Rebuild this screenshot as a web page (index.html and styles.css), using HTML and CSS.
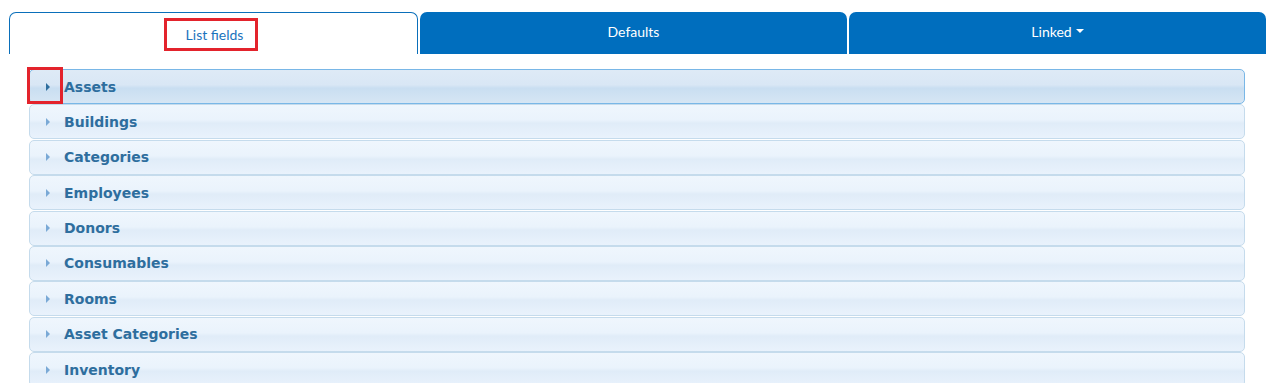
FILE: index.html
```html
<!DOCTYPE html>
<html lang="en">
<head>
    <meta charset="UTF-8">
    <title>List fields</title>
    <link rel="stylesheet" href="styles.css">
</head>
<body>
    <div class="tabs">
        <div class="tab tab-active"><span class="marked">List fields</span></div>
        <div class="tab tab-defaults">Defaults</div>
        <div class="tab tab-linked">Linked <span class="caret"></span></div>
    </div>
    <div class="panel">
        <div class="row row-active"><span class="mark-box"></span><span class="arrow-box"><span class="arrow"></span></span>Assets</div>
        <div class="row"><span class="arrow-box"><span class="arrow"></span></span>Buildings</div>
        <div class="row"><span class="arrow-box"><span class="arrow"></span></span>Categories</div>
        <div class="row"><span class="arrow-box"><span class="arrow"></span></span>Employees</div>
        <div class="row"><span class="arrow-box"><span class="arrow"></span></span>Donors</div>
        <div class="row"><span class="arrow-box"><span class="arrow"></span></span>Consumables</div>
        <div class="row"><span class="arrow-box"><span class="arrow"></span></span>Rooms</div>
        <div class="row"><span class="arrow-box"><span class="arrow"></span></span>Asset Categories</div>
        <div class="row"><span class="arrow-box"><span class="arrow"></span></span>Inventory</div>
    </div>
</body>
</html>
```

FILE: styles.css
```css
body {
    margin: 0;
    padding: 12px 13px 0 9px;
    background-color: #ffffff;
    font-family: Lato, "Open Sans", sans-serif;
    overflow: hidden;
}
.tabs {
    display: flex;
    gap: 2px;
    height: 42px;
}
.tab {
    display: flex;
    justify-content: center;
    align-items: center;
    box-sizing: border-box;
    padding-bottom: 4px;
    border-radius: 7px 7px 0 0;
    background-color: #006ebe;
    color: #ffffff;
    font-size: 14px;
}
.tab-active {
    width: 409px;
    align-items: flex-start;
    background-color: #ffffff;
    border: 1px solid #0a6fba;
    border-bottom: none;
    color: #1a73bd;
}
.tab-defaults {
    width: 427px;
}
.tab-linked {
    flex: 1;
}
.marked {
    display: inline-block;
    margin: 5px 0 0 -5px;
    padding: 5px 12px 5px 19px;
    line-height: 17px;
    border: 3px solid #e3232c;
}
.caret {
    display: inline-block;
    margin-left: 4px;
    border-left: 4px solid transparent;
    border-right: 4px solid transparent;
    border-top: 4px solid #ffffff;
    vertical-align: middle;
}
.panel {
    padding: 15px 21px 0 20px;
}
.row {
    position: relative;
    display: flex;
    align-items: center;
    box-sizing: border-box;
    height: 35px;
    margin-bottom: 0.375px;
    border: 1px solid #c5dbec;
    border-radius: 5px;
    background: linear-gradient(to bottom, #eff6fd 0%, #eaf3fc 45%, #e0ecf8 55%, #e9f2fc 100%);
    color: #2e6e9e;
    font-family: "DejaVu Sans", Verdana, sans-serif;
    font-weight: bold;
    font-size: 14px;
}
.row-active {
    border-color: #79b7e7;
    background: linear-gradient(to bottom, #deeaf6 0%, #d9e7f5 45%, #c9def1 55%, #d6e6f4 100%);
}
.arrow-box {
    display: flex;
    align-items: center;
    justify-content: center;
    width: 34px;
    height: 100%;
}
.arrow {
    display: block;
    margin-left: 1px;
    border-top: 4px solid transparent;
    border-bottom: 4px solid transparent;
    border-left: 4px solid #7aa9d6;
}
.row-active .arrow {
    border-left-color: #2e6e9e;
}
.mark-box {
    position: absolute;
    left: -3px;
    top: -3px;
    width: 36px;
    height: 37px;
    box-sizing: border-box;
    border: 3px solid #e3232c;
}
```
